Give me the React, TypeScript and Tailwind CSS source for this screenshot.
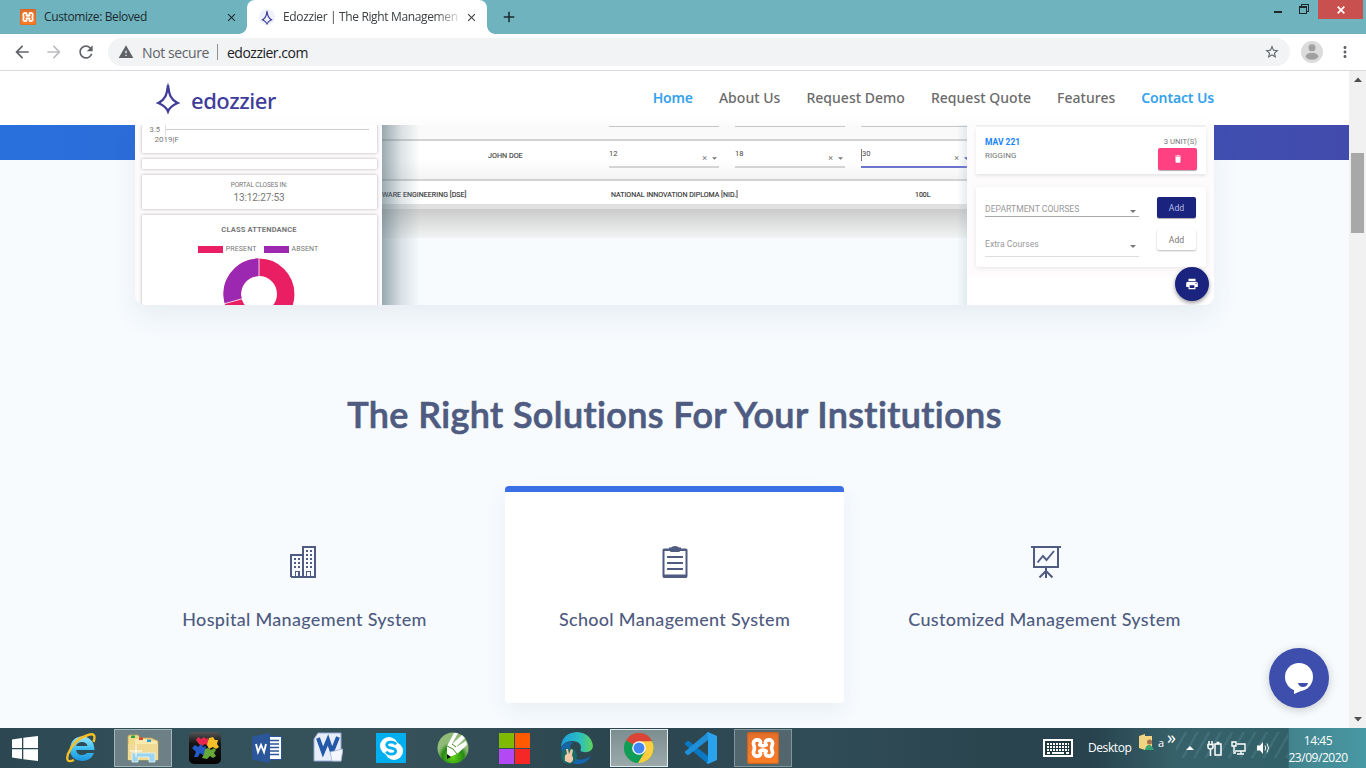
import type { ReactNode } from "react";
import { MdArrowBack, MdArrowForward, MdRefresh, MdStarBorder, MdMoreVert, MdWarning, MdPrint, MdDelete, MdClose, MdAdd } from "react-icons/md";

const UI = "font-['Open_Sans','Noto_Sans',sans-serif]";

function Xampp({ className }: { className: string }) {
  return (
    <svg className={className} viewBox="0 0 32 32">
      <defs>
        <linearGradient id="xo" x1="0" y1="0" x2="0" y2="1">
          <stop offset="0" stopColor="#d96a2a" />
          <stop offset=".15" stopColor="#e8722c" />
          <stop offset="1" stopColor="#fb7d26" />
        </linearGradient>
      </defs>
      <rect width="32" height="32" rx="3" fill="url(#xo)" />
      <rect x=".7" y=".7" width="30.6" height="30.6" rx="2.5" fill="none" stroke="#c95f1d" strokeWidth="1" />
      <path d="M12.500 8.500 C8.500 6.500 5.500 9.500 6.800 13 C7.600 15 7.600 17 6.800 19 C5.500 22.500 8.500 25.500 12.500 23.500 M19.500 8.500 C23.500 6.500 26.500 9.500 25.200 13 C24.400 15 24.400 17 25.200 19 C26.500 22.500 23.500 25.500 19.500 23.500" fill="none" stroke="#fff" strokeWidth="3.600" strokeLinecap="round" />
      <path d="M12.500 8.500 Q14.500 10 12.800 13 Q16 14.800 19.200 13 Q17.500 10 19.500 8.500 M12.500 23.500 Q14.500 22 12.800 19 Q16 17.200 19.200 19 Q17.500 22 19.500 23.500" fill="none" stroke="#fff" strokeWidth="3.600" strokeLinecap="round" strokeLinejoin="round" />
    </svg>
  );
}

function Diamond({ className }: { className: string }) {
  return (
    <svg className={className} viewBox="0 0 24 32">
      <path d="M12 3 C13 13 15 17.500 21.500 21 C16 23.500 13.500 25.500 12 29.500 C10.500 25.500 8 23.500 2.500 21 C9 17.500 11 13 12 3Z" fill="none" stroke="#3f3d99" strokeWidth="2.300" strokeLinejoin="miter" />
      <path d="M12 0 L10.500 8 H13.500Z M0 21 L5 19.500 V22.500Z M24 21 L19 19.500 V22.500Z" fill="#3f3d99" />
    </svg>
  );
}

function TabStrip() {
  return (
    <div className="flex h-[34px] bg-[#6fb3be] text-[12px] text-[#1c2b2f]">
      <div className="flex w-[247px] items-center pl-5 pr-[9px]">
        <Xampp className="size-4" />
        <span className="ml-2 flex-1 whitespace-nowrap tracking-[-0.38px]">Customize: Beloved</span>
        <MdClose className="size-[13px]" />
      </div>
      <div className="relative flex w-[240px] items-center rounded-t-[8px] bg-white pl-3 pr-[9px] text-[#3c4043]">
        <div className="absolute -left-2 bottom-0 size-2 bg-[radial-gradient(circle_at_0_0,transparent_7.5px,white_8px)]" />
        <div className="absolute -right-2 bottom-0 size-2 bg-[radial-gradient(circle_at_100%_0,transparent_7.5px,white_8px)]" />
        <div className="flex size-4 items-center justify-center rounded-full bg-[#edf2fa]">
          <Diamond className="h-[15px] w-3" />
        </div>
        <span className="ml-2 w-[176px] whitespace-nowrap tracking-[-0.36px] [mask-image:linear-gradient(to_right,#000_152px,transparent_180px)]">Edozzier | The Right Managemen</span>
        <MdClose className="ml-auto size-[13px]" />
      </div>
      <MdAdd className="ml-[13px] mt-[8px] size-[18px]" />
      <div className="ml-auto flex items-start">
        <svg className="mr-[8px] h-[18px] w-[40px]" viewBox="0 0 40 18" shapeRendering="crispEdges">
          <path d="M4 11H12V13H4Z" fill="#1f292c" />
          <path d="M29.500 7.500H36.500V13.500H29.500Z M29 6.500H37 M31.500 6V4.500H38.500V11H37" fill="none" stroke="#1f292c" />
        </svg>
        <div className="mr-[3px] flex h-[19px] w-[45px] items-center justify-center bg-[#c8504f] text-white">
          <svg className="size-2" viewBox="0 0 8 8"><path d="M.7 .7 7.300 7.300M7.300 .7 .7 7.300" stroke="#fff" strokeWidth="1.700" /></svg>
        </div>
      </div>
    </div>
  );
}

function Toolbar() {
  return (
    <div className="flex h-[37px] items-center border-b border-[#d9dadd] bg-white pl-[12px] text-[#5f6368]">
      <MdArrowBack className="size-5" />
      <MdArrowForward className="ml-3 size-5 text-[#bbbdc0]" />
      <MdRefresh className="ml-3 size-5" />
      <div className="ml-[12px] flex h-7 w-[1182px] items-center rounded-full bg-[#f1f3f4] pl-[10px] pr-[10px] text-[14px]">
        <MdWarning className="size-4" />
        <span className="ml-2 w-[67px] whitespace-nowrap tracking-[-0.4px]">Not secure</span>
        <span className="ml-[8px] h-4 w-px bg-[#8d9195]" />
        <span className="ml-[9px] tracking-[-0.5px] text-[#202124]">edozzier.com</span>
        <MdStarBorder className="ml-auto size-4" />
      </div>
      <svg className="ml-[11px] size-[22px]" viewBox="0 0 22 22">
        <circle cx="11" cy="11" r="11" fill="#dcdcdc" />
        <circle cx="11" cy="6.800" r="3.500" fill="#a0a0a0" />
        <ellipse cx="11" cy="15.200" rx="6.300" ry="3.500" fill="#a0a0a0" />
      </svg>
      <MdMoreVert className="ml-[13px] size-[18px]" />
    </div>
  );
}

function SiteHeader() {
  return (
    <header className="flex h-[54px] items-center bg-white pl-[156px] pr-[135px]">
      <Diamond className="mb-px h-8 w-6" />
      <span className="ml-[11px] mt-[4px] font-['Noto_Sans',sans-serif] text-[22px] font-medium leading-none tracking-[-0.45px] text-[#3f3d99]">edozzier</span>
      <nav className="mb-[2px] ml-auto flex gap-[26px] whitespace-nowrap font-['Noto_Sans',sans-serif] text-[14px] font-medium tracking-[0.02px] text-[#6b6b6b]">
        <a className="font-semibold tracking-[-0.14px] text-[#36a2eb]">Home</a>
        <a>About Us</a>
        <a>Request Demo</a>
        <a>Request Quote</a>
        <a>Features</a>
        <a className="font-semibold tracking-[-0.14px] text-[#36a2eb]">Contact Us</a>
      </nav>
    </header>
  );
}

function Field({ value, active }: { value: string; active?: boolean }) {
  return (
    <div className={active ? "flex h-[19px] w-[110px] shrink-0 border-b-2 border-[#6a74cc]" : "flex h-[19px] w-[110px] shrink-0 border-b-2 border-[#d4d4d4]"}>
      <span className={active ? "h-3 border-l border-[#777] text-[7.5px]" : "h-3 text-[7.5px]"}>{value}</span>
      <span className="ml-auto mt-[4px] text-[9px] leading-[10px] text-[#777]">×</span>
      <svg className="ml-[5px] mr-[2px] mt-[8px] h-[3px] w-[5px]" viewBox="0 0 6 3"><path d="M0 0H6L3 3Z" fill={active ? "#4450c0" : "#777"} /></svg>
    </div>
  );
}

function SelectLine({ label, className }: { label: string; className: string }) {
  return (
    <div className={className}>
      <span>{label}</span>
      <svg className="ml-auto mr-[3px] mt-1 h-[3px] w-[6px]" viewBox="0 0 6 3"><path d="M0 0H6L3 3Z" fill="#777" /></svg>
    </div>
  );
}

function Dashboard() {
  return (
    <div className="relative mx-auto flex h-[180px] w-[1079px] overflow-hidden rounded-b-[10px] bg-[#f7fbfe] font-[Roboto,sans-serif] text-[7.5px] leading-[10px] text-[#777]">
      <div className="flex w-[247px] shrink-0 flex-col bg-[#fdfafb] pl-[6.5px] [&>div]:w-[235px] [&>div]:shrink-0 [&>div]:rounded-[1px] [&>div]:bg-white [&>div]:shadow-[0_0_3px_#aaa]">
        <div className="h-[28px] pl-[8px]">
          <div className="flex"><span className="w-[16px] border-r border-[#ddd]">3.5</span><span className="h-[5px] w-[203px] border-b border-[#ccc]" /></div>
          <span className="pl-[5px] text-[8px]">2019|F</span>
        </div>
        <div className="mt-[6px] h-[10px]" />
        <div className="mt-[6px] h-[34px] pt-[6px] text-center">
          <p className="text-[6.5px] leading-[9px] tracking-[-0.1px]">PORTAL CLOSES IN:</p>
          <p className="mt-[1px] text-[10px] leading-[13px] tracking-[-0.1px]">13:12:27:53</p>
        </div>
        <div className="mt-[6px] h-[92px] pt-[10px] text-center">
          <p className="font-bold tracking-[0.15px]">CLASS ATTENDANCE</p>
          <div className="mr-[2px] mt-[9px] flex items-center justify-center text-[7px]">
            <span className="mr-[3px] h-[7px] w-[25px] bg-[#e91e63]" /><span className="tracking-[0.15px]">PRESENT</span>
            <span className="ml-[7px] mr-[3px] h-[7px] w-[25px] bg-[#9c27b0]" /><span className="tracking-[0.1px]">ABSENT</span>
          </div>
          <svg className="mx-auto mt-[4px] size-[72px]" viewBox="-36 -36 72 72">
            <circle r="26.700" fill="none" stroke="#e91e63" strokeWidth="17.500" />
            <path d="M0 -26.700 A26.700 26.700 0 0 0 -25.700 7.200" fill="none" stroke="#9c27b0" strokeWidth="17.500" />
            <path d="M0 -36V-17.500M-34.500 9.700-17 4.800" stroke="#fff" strokeWidth=".8" />
          </svg>
        </div>
      </div>
      <div className="relative flex w-[585px] shrink-0 flex-col overflow-hidden text-[#444]">
        <div className="flex h-[14px] gap-[16px] bg-[#fafafa] pl-[227px] [&>i]:h-[2px] [&>i]:w-[110px] [&>i]:shrink-0 [&>i]:border-b [&>i]:border-[#c8c8c8]"><i /><i /><i /></div>
        <div className="flex h-[42px] items-start border-y-2 border-[#d2d2d2] bg-gradient-to-b from-white from-50% to-[#f4f4f4] pt-[8px]">
          <span className="w-[227px] shrink-0 pl-[106px] pt-[2px] text-[7.2px] [-webkit-text-stroke:0.15px_#444]">JOHN DOE</span>
          <div className="flex shrink-0 gap-[16px]"><Field value="12" /><Field value="18" /><Field value="30" active /></div>
        </div>
        <div className="flex h-[23px] items-center bg-white pt-[5px] text-[7px] text-[#333] [-webkit-text-stroke:0.15px_#333]">
          <span className="w-[229px] tracking-[0.05px]">WARE ENGINEERING [DSE]</span>
          <span className="w-[304px] tracking-[0.02px]">NATIONAL INNOVATION DIPLOMA [NID.]</span>
          <span>100L</span>
        </div>
        <div className="h-[5px] bg-[#e0e0e0]" />
        <div className="h-[29px] bg-gradient-to-b from-[#cbcbcb] to-[#f2f4f4]" />
        <div className="absolute inset-y-0 left-0 w-[38px] bg-gradient-to-r from-[#58727d]/60 via-[#58727d]/20 to-transparent" />
        <div className="absolute inset-y-0 right-0 w-[10px] bg-gradient-to-l from-[#8aa2b0]/20 to-transparent" />
      </div>
      <div className="w-[247px] shrink-0 bg-[linear-gradient(#fefbfc_150px,#fff_152px)] pl-[9px]">
        <div className="h-[2px] w-[230px] bg-[#f1f1f1]" />
        <div className="flex h-[47px] w-[230px] justify-between bg-white pl-[9px] pr-[9px] pt-[10px] shadow-[0_2px_3px_#e6e6e6]">
          <div>
            <p className="text-[8.5px] font-bold text-[#1984f7]">MAV 221</p>
            <p className="mt-[4px] text-[8px]">RIGGING</p>
          </div>
          <div className="flex flex-col items-end">
            <span className="text-[7.7px]">3 UNIT(S)</span>
            <span className="mt-px flex h-[22px] w-[39px] shrink-0 items-center justify-center rounded-[2px] bg-[#ff4081] text-white shadow-[0_1px_1px_#aaa]"><MdDelete className="size-[10px]" /></span>
          </div>
        </div>
        <div className="mt-[13px] flex h-[80px] w-[230px] justify-between rounded-[2px] bg-white pl-[9px] pr-[10px] pt-[10px] text-[8.6px] text-[#999] shadow-[0_1px_4px_#e6e6e6]">
          <div className="w-[154px]">
            <SelectLine label="DEPARTMENT COURSES" className="flex h-[20px] items-center border-b border-[#aaa] pt-[5px] tracking-[0.02px]" />
            <SelectLine label="Extra Courses" className="mt-[19px] flex h-[21px] items-center border-b border-[#ddd] pb-1 tracking-[0.05px]" />
          </div>
          <div className="flex flex-col gap-[11px]">
            <span className="flex h-[21px] w-[39px] items-center justify-center rounded-[2px] bg-[#1a237e] text-[#b9bde4] shadow-[0_1px_1px_#aaa]">Add</span>
            <span className="flex h-[21px] w-[39px] items-center justify-center rounded-[2px] bg-white text-[#777] shadow-[0_1px_2px_#bbb]">Add</span>
          </div>
        </div>
      </div>
      <div className="absolute left-[1040px] top-[142px] flex size-[34px] items-center justify-center rounded-full bg-[#1a237e] text-white shadow-[0_2px_4px_#999]"><MdPrint className="size-[14px]" /></div>
    </div>
  );
}

function Buildings() {
  return (
    <svg className="mr-[3px] h-8 w-[26px]" viewBox="0 0 26 32" shapeRendering="crispEdges">
      <path d="M1 31V9H13M13 31V1H25V31ZM1 31H13" fill="none" stroke="#4f5b80" strokeWidth="2" />
      <path d="M4 12h2v2h-2zM8 12h2v2h-2zM4 16h2v2h-2zM8 16h2v2h-2zM4 20h2v2h-2zM8 20h2v2h-2zM16 4h2v2h-2zM20 4h2v2h-2zM16 8h2v2h-2zM20 8h2v2h-2zM16 12h2v2h-2zM20 12h2v2h-2zM16 16h2v2h-2zM20 16h2v2h-2zM16 20h2v2h-2zM20 20h2v2h-2z" fill="#4f5b80" />
      <path d="M5.500 30V25.500H9V30M16.500 30V25.500H20.500V30" fill="none" stroke="#4f5b80" strokeWidth="1.600" />
    </svg>
  );
}

function Clipboard() {
  return (
    <svg className="h-8 w-[26px]" viewBox="0 0 26 32">
      <path d="M2 2.500H24Q25.500 2.500 25.500 4V30Q25.500 32 24 32H2Q.5 32 .5 30V4Q.5 2.500 2 2.500ZM2.500 5V28.500H23.500V5Z" fill="#4f5b80" fillRule="evenodd" />
      <path d="M7 1.500H9Q10 0 13 0T17 1.500H19V4.500L17 6H9L7 4.500Z" fill="#4f5b80" />
      <path d="M5 11H21M5 17H21M5 23H21" stroke="#4f5b80" strokeWidth="2" />
    </svg>
  );
}

function Presentation() {
  return (
    <svg className="ml-[2px] h-8 w-[30px]" viewBox="0 0 30 32" fill="none" stroke="#4f5b80">
      <path d="M0 1H30M3 1V21H27V1M15 21V32M15 25L8.500 31.500M15 25L21.500 31.500" strokeWidth="2" />
      <path d="M6.500 16.500L12 10L15.500 14L23 5" strokeWidth="1.900" />
    </svg>
  );
}

function Solution({ icon, label, active }: { icon: ReactNode; label: string; active?: boolean }) {
  return (
    <div className={active ? "flex h-[217px] w-[339px] flex-col items-center rounded-[4px] border-t-[6px] border-[#3a6fe6] bg-white pt-[54px] shadow-[0_8px_20px_rgba(70,90,130,0.07)]" : "flex h-[217px] w-[339px] flex-col items-center pt-[60px]"}>
      {icon}
      <h3 className="mt-[28px] whitespace-nowrap text-[18px] font-medium leading-[27px] tracking-[0.31px]">{label}</h3>
    </div>
  );
}

function Page() {
  return (
    <main className="relative flex h-[657px] w-[1349px] flex-col overflow-hidden bg-[#f7fbfe]">
      <SiteHeader />
      <section className="bg-[linear-gradient(90deg,#2970dd,#424bac)] bg-[length:100%_35px] bg-no-repeat">
        <div className="mx-auto w-[1079px] rounded-b-[10px] shadow-[0_12px_26px_rgba(60,80,120,0.08)]"><Dashboard /></div>
      </section>
      <section className="mt-[82px] flex flex-col items-center font-[Lato,sans-serif] text-[#4f5b80]">
        <h2 className="whitespace-nowrap text-[36px] font-semibold leading-[54px] tracking-[0.38px] [-webkit-text-stroke:0.7px_#4f5b80]">The Right Solutions For Your Institutions</h2>
        <div className="mt-[45px] flex gap-[31px]">
          <Solution icon={<Buildings />} label="Hospital Management System" />
          <Solution icon={<Clipboard />} label="School Management System" active />
          <Solution icon={<Presentation />} label="Customized Management System" />
        </div>
      </section>
      <div className="absolute bottom-[20px] right-[20px] flex size-[60px] items-center justify-center rounded-full bg-[#3d4eac] shadow-[0_2px_10px_rgba(0,0,0,0.2)]">
        <svg className="h-[31px] w-[28px]" viewBox="0 0 28 31"><circle cx="14" cy="14" r="14" fill="#fff" /><path d="M9 24V31L23 25Z" fill="#fff" /><path d="M13 20H23Q22 24 18 24T13 20Z" fill="#3d4eac" /></svg>
      </div>
    </main>
  );
}

function Scrollbar() {
  return (
    <div className="flex w-[17px] flex-col items-center bg-[#f1f1f1]">
      <svg className="mt-[6px] h-[5px] w-[8px]" viewBox="0 0 8 5"><path d="M0 5H8L4 .5Z" fill="#505050" /></svg>
      <div className="mt-[71px] h-[80px] w-[13px] bg-[#a8a8a8]" />
      <svg className="mb-[6px] mt-auto h-[5px] w-[8px]" viewBox="0 0 8 5"><path d="M0 0H8L4 4.500Z" fill="#505050" /></svg>
    </div>
  );
}

function Slot({ children }: { children: ReactNode }) {
  return <div className="flex w-[62px] items-center justify-center">{children}</div>;
}

function Taskbar() {
  return (
    <footer className="flex h-[40px] bg-[linear-gradient(90deg,#2c4751_0%,#34525b_15%,#365159_30%,#2b454f_45%,#304c56_60%,#2b454f_72%,#28434d_80%,#37616a_86%,#326069_94.3%,#43838d_94.4%,#4799a4_100%)] text-white">
      <div className="flex w-[50px] items-center justify-center">
        <svg className="h-[25px] w-[26px]" viewBox="0 0 26 25"><path d="M0 3.500 10 2V12H0ZM11.300 1.800 26 0V12H11.300ZM0 13.300H10V23L0 21.500ZM11.300 13.300H26V25L11.300 23.200Z" fill="#fff" /></svg>
      </div>
      <Slot>
        <svg className="size-[30px]" viewBox="0 0 30 30">
          <defs><linearGradient id="ie" x1="0" y1="0" x2="0" y2="1"><stop offset="0" stopColor="#9be4fb" /><stop offset=".5" stopColor="#3fc1f3" /><stop offset="1" stopColor="#1e94dc" /></linearGradient></defs>
          <path d="M28.500 17H10Q11 22 16 22Q19.500 22 21 20H28Q25 28 16 28Q4 27 4 16Q5 4 16 3.500Q28 4 28.500 17ZM10 13H21.500Q20.500 9 16 9T10 13Z" fill="url(#ie)" fillRule="evenodd" />
          <path d="M27.500 9Q31 -1 22 2Q8 6 2 21Q-1 31 8 27" fill="none" stroke="#f7bf25" strokeWidth="2.400" />
        </svg>
      </Slot>
      <Slot>
        <div className="flex h-[38px] w-[58px] items-center justify-center border border-[#a4b5b8] bg-[#6c8085]">
          <svg className="h-[30px] w-[32px]" viewBox="0 0 32 30">
            <path d="M1 4Q1 2 3 2H11L13 5H24L31 8V27H1Z" fill="#f3d98a" stroke="#c9a650" strokeWidth=".7" />
            <path d="M8 6H19L21 8H30V12H8Z" fill="#fbeab0" />
            <path d="M4 2.500H8V5H4Z" fill="#29a745" /><path d="M12 4.500H16V7H12Z" fill="#d8442e" /><path d="M20 6.500H24V9H20Z" fill="#2c9bd8" />
            <path d="M1 11H31V27H1Z" fill="#f1db94" />
            <path d="M5 29V20H28V29H22V24H11V29Z" fill="#9bd4ee" stroke="#e3f5fd" strokeWidth=".8" />
            <path d="M9 12V24M3 18H15" stroke="#fff" strokeWidth="1" />
          </svg>
        </div>
      </Slot>
      <Slot>
        <svg className="size-8" viewBox="0 0 32 32">
          <defs><linearGradient id="blk" x1="0" y1="0" x2="0" y2="1"><stop offset="0" stopColor="#555" /><stop offset=".35" stopColor="#161616" /><stop offset="1" stopColor="#050505" /></linearGradient></defs>
          <rect width="32" height="32" rx="5" fill="url(#blk)" />
          <path d="M7 8L9 5L12 7L15 5L17 7L19 6L19 14L16 12L13 14L10 12Z" fill="#e6284f" />
          <path d="M19 9L20 6L24 5L26 8L29 8L28 12L30 15L27 17L24 15L20 17L18 13Z" fill="#f4bf28" />
          <path d="M3 16L6 13L9 15L12 12L14 15L17 14L16 19L18 22L14 23L11 21L9 25L5 25L7 20Z" fill="#245ac5" />
          <path d="M16 17L19 16L22 18L25 16L27 18L25 21L27 24L24 26L21 24L18 27L13 26L15 22Z" fill="#66a938" />
        </svg>
      </Slot>
      <Slot>
        <svg className="h-[30px] w-[30px]" viewBox="0 0 30 30"><rect x="15" y="3.500" width="14.500" height="23" fill="#fff" stroke="#2b579a" /><path d="M18 7.500H27M18 11H27M18 14.500H27M18 18H27M18 21.500H27" stroke="#2b579a" strokeWidth="1.400" /><path d="M0 3.500L18 0V30L0 26.500Z" fill="#2b579a" /><path d="M4 11L6 19L9 12L12 19L14 11" fill="none" stroke="#fff" strokeWidth="1.900" /></svg>
      </Slot>
      <Slot>
        <svg className="mb-[3px] mr-[2px] h-[30px] w-[30px]" viewBox="0 0 30 30"><path d="M5 1H28V29H1V7Z" fill="#e7eefa" stroke="#91a9d5" /><path d="M5 6L10 20L15 8L19 20L25 5" fill="none" stroke="#2359a8" strokeWidth="4" /><path d="M17 20L30 17L28 29H19Z" fill="#f4f7fc" stroke="#a6b6d4" strokeWidth=".8" /></svg>
      </Slot>
      <Slot>
        <svg className="size-[30px]" viewBox="0 0 30 30"><rect width="30" height="30" fill="#00aff0" /><circle cx="13" cy="13" r="9" fill="#fff" /><circle cx="18" cy="18" r="9" fill="#fff" /><path d="M20 11.500Q18.500 9 15 9Q10.500 9.300 10.700 12Q11 14.500 15.500 15.200Q20 16 19.700 18.600Q19 21.200 15 21.200Q11.500 21 10.500 18.500" fill="none" stroke="#00aff0" strokeWidth="2.700" /></svg>
      </Slot>
      <Slot>
        <svg className="size-8" viewBox="0 0 32 32"><defs><radialGradient id="cor" cx=".5" cy=".8"><stop offset="0" stopColor="#60d514" /><stop offset=".7" stopColor="#288916" /><stop offset="1" stopColor="#8fba78" /></radialGradient></defs><circle cx="16" cy="16" r="15.500" fill="url(#cor)" /><path d="M10 14L17 1L21 1L15 12L25 3L28 6L19 15L29 9L30 13L20 22L10 26Z" fill="#fff" /><path d="M10 14L16 17L20 22M15 12L19 15" fill="none" stroke="#438c22" strokeWidth="1" /><path d="M10 22L14 25L10 27Z" fill="#111" /></svg>
      </Slot>
      <Slot>
        <svg className="mr-[2px] size-[31px]" viewBox="0 0 31 31"><path d="M0 0H15V15H0Z" fill="#7fb900" /><path d="M16 0H31V15H16Z" fill="#ff5a00" /><path d="M0 16H15V31H0Z" fill="#b249f5" /><path d="M16 16H31V31H16Z" fill="#f52727" /></svg>
      </Slot>
      <Slot>
        <svg className="size-8" viewBox="0 0 32 32"><defs><linearGradient id="eg"><stop offset="0" stopColor="#1c9cdc" /><stop offset=".6" stopColor="#2bbfc0" /><stop offset="1" stopColor="#61d457" /></linearGradient></defs><path d="M0 15Q1 1 16 0Q30 1 32 14Q31 21 23 20Q18 20 20 16Q20 9 11 9Q4 9 0 15Z" fill="url(#eg)" /><path d="M11 11Q6 17 12 25Q18 31 30 24Q25 33 15 32Q2 29 0 16Q4 9 12 10Z" fill="#1566ad" /><circle cx="8" cy="24" r="8" fill="#176b65" /><path d="M4 29Q3 22 6 22L5 17L7 17L8 22L10 17L12 18L11 23Q14 29 9 31Z" fill="#f1c8a9" /></svg>
      </Slot>
      <Slot>
        <div className="flex h-[38px] w-[58px] items-center justify-center border border-[#e3eaeb] bg-gradient-to-b from-[#7d8e90] to-[#9ba9ab]">
          <svg className="size-[30px]" viewBox="0 0 30 30"><circle cx="15" cy="15" r="15" fill="#4caf50" /><path d="M15 15L2 7.500A15 15 0 0 1 28 7.500Z" fill="#db4437" /><path d="M15 15L2 7.500A15 15 0 0 0 14 30L21.500 18Z" fill="#109d58" /><path d="M15 8.300H28A15 15 0 0 1 14 30L21.500 18Z" fill="#ffcd40" /><circle cx="15" cy="15" r="6.800" fill="#fff" /><circle cx="15" cy="15" r="5.500" fill="#4285f4" /></svg>
        </div>
      </Slot>
      <Slot>
        <svg className="size-8" viewBox="0 0 32 32">
          <path d="M0 11L3 8.500L23 24V32L0 12.500Z" fill="#0a78c2" />
          <path d="M0 21L3 23.500L23 8V0L0 19.500Z" fill="#1f8fd8" />
          <path d="M23 0L32 4V28L23 32L21 30Q23 31 23 28V4Q23 1 21 2Z" fill="#2aa3ee" />
        </svg>
      </Slot>
      <Slot>
        <div className="flex h-[38px] w-[58px] items-center justify-center border border-[#81959a] bg-[#52676d]"><Xampp className="size-8" /></div>
      </Slot>
      <div className="ml-auto flex items-center text-[12px]">
        <svg className="mr-[15px] h-[18px] w-[30px]" viewBox="0 0 30 18" shapeRendering="crispEdges"><path d="M1 1H29V17H1Z" fill="#1f3840" stroke="#fff" strokeWidth="2" /><path d="M4 5H26M4 8H26M4 11H26" stroke="#fff" strokeWidth="2" strokeDasharray="2 1" /><path d="M4 14H7M9 14H21M23 14H26" stroke="#fff" strokeWidth="2" /></svg>
        <span className="w-[44px] whitespace-nowrap tracking-[-0.4px]">Desktop</span>
        <svg className="mb-[11px] ml-[7px] h-[17px] w-[15px]" viewBox="0 0 15 17"><path d="M0 2L6 0V16L0 14ZM6 2H13V15H6Z" fill="#f1d481" /><circle cx="10.500" cy="8" r="2.500" fill="#a36f4d" /><path d="M6 16Q7 11 10 11T15 16Z" fill="#38a275" /></svg>
        <span className="mb-[10px] ml-[4px] text-[11px]">a</span>
        <span className="mb-[22px] ml-[3px] text-[18px] leading-none">»</span>
        <div className="flex h-[40px] w-[112px] items-center bg-[repeating-linear-gradient(120deg,transparent_0px,transparent_7px,rgba(120,180,190,0.16)_8px,rgba(120,180,190,0.16)_10px)] bg-[length:100%_26px] bg-[position:0_4px] bg-no-repeat pl-[10px]">
          <svg className="h-[4px] w-[8px]" viewBox="0 0 8 4"><path d="M0 4H8L4 0Z" fill="#fff" /></svg>
          <svg className="ml-[13px] h-[15px] w-[15px]" viewBox="0 0 15 15" fill="none" stroke="#fff"><path d="M8 3H14V14H8ZM9.500 1.500H12.500M2 0V3M5 0V3M1 3.500H6V6Q6 8 3.500 8Q1 8 1 6ZM3.500 8V15" strokeWidth="1.500" /></svg>
          <svg className="ml-[9px] h-[14px] w-[15px]" viewBox="0 0 15 14" fill="none" stroke="#fff"><path d="M6 3H14V10H4M6 13H13M10 10V13M1 1H5V5H1ZM3 5V12H5" strokeWidth="1.400" /></svg>
          <svg className="ml-[11px] h-[14px] w-[13px]" viewBox="0 0 13 14"><path d="M0 4.500H3L6 1V13L3 9.500H0Z" fill="#fff" /><path d="M8 4.500Q9.500 7 8 9.500M10 2.500Q13 7 10 11.500" fill="none" stroke="#fff" /></svg>
        </div>
        <div className="mr-[18px] mt-[2px] w-[60px] whitespace-nowrap text-center leading-[17px] tracking-[-0.45px]">
          <p>14:45</p>
          <p>23/09/2020</p>
        </div>
      </div>
    </footer>
  );
}

export default function App() {
  return (
    <div className={`${UI} flex h-[768px] w-[1366px] flex-col overflow-hidden bg-white`}>
      <TabStrip />
      <Toolbar />
      <div className="flex"><Page /><Scrollbar /></div>
      <Taskbar />
    </div>
  );
}
